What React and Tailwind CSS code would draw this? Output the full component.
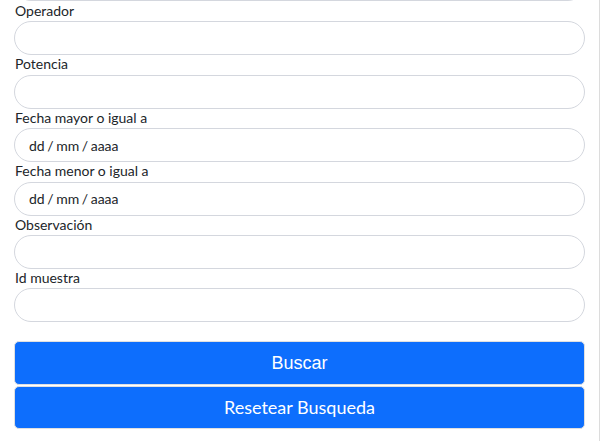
import React from "react";

const campos = [
  { label: "Operador" },
  { label: "Potencia" },
  { label: "Fecha mayor o igual a", fecha: true },
  { label: "Fecha menor o igual a", fecha: true },
  { label: "Observación" },
  { label: "Id muestra" },
];

const Campo = ({ label, fecha }) => (
  <div className="flex flex-col">
    <label className="text-[14px] leading-[17.4px] mb-[2px] text-[#212529] pl-[1px]">{label}</label>
    <div className="h-[34px] rounded-full border border-[#d4d7de] bg-white flex items-center px-[14px] text-[14px] text-[#212529] [word-spacing:-1px]">
      {fecha ? "dd / mm / aaaa" : ""}
    </div>
  </div>
);

export default function App() {
  return (
    <div className="w-[600px] h-[441px] bg-white border-r border-[#dcdcdc] overflow-hidden" style={{ fontFamily: "Lato, 'Liberation Sans', sans-serif" }}>
      <div className="pl-[14px] pr-[14px]">
        {/* borde del campo anterior */}
        <div className="h-[34px] -mt-[33px] rounded-full border border-[#d4d7de]" />
        <div className="mt-[1px]">
          {campos.map((c) => (
            <Campo key={c.label} label={c.label} fecha={c.fecha} />
          ))}
        </div>
        <div className="mt-[19px] flex flex-col gap-[1px]">
          <button className="h-[44px] w-full rounded-[5px] bg-[#0d6efd] border border-[#e0e0e0] text-white text-[18px] font-['Liberation_Sans',sans-serif]">
            Buscar
          </button>
          <button className="h-[43px] w-full rounded-[5px] bg-[#0d6efd] border border-[#e0e0e0] text-white text-[18px]">
            Resetear Busqueda
          </button>
        </div>
      </div>
    </div>
  );
}
